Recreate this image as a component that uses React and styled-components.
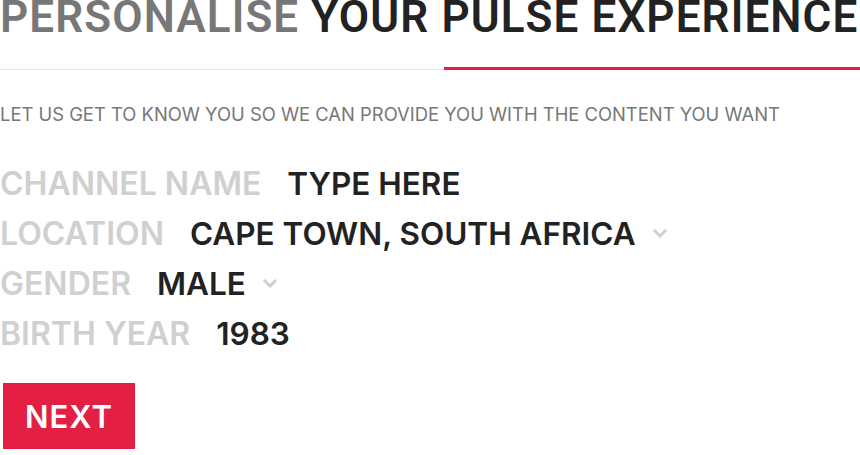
import React from 'react';
import styled, { createGlobalStyle } from 'styled-components';

const Global = createGlobalStyle`
  body {
    margin: 0;
    background: #fff;
    font-family: Inter, "Noto Sans", sans-serif;
  }
`;

const Page = styled.div`
  width: 860px;
  height: 455px;
  overflow: hidden;
  display: flex;
  flex-direction: column;
`;

const Title = styled.h1`
  margin: -9px 0 0;
  font-family: Roboto, "Liberation Sans", sans-serif;
  font-weight: 600;
  font-size: 44px;
  line-height: 52px;
  letter-spacing: 1.1px;
  white-space: nowrap;
  color: #222;
`;

const Muted = styled.span`
  color: #777;
`;

const Rule = styled.div`
  margin-top: 24px;
  display: flex;
  align-items: flex-end;
  height: 3px;
`;

const RuleSegment = styled.div`
  flex: ${(p) => (p.$accent ? '0 0 416px' : '1')};
  height: ${(p) => (p.$accent ? '3px' : '1px')};
  background: ${(p) => (p.$accent ? '#e31f43' : '#e5e5e5')};
`;

const Intro = styled.p`
  margin: 33px 0 0;
  font-size: 18.4px;
  font-weight: 400;
  color: #777;
`;

const Form = styled.div`
  margin-top: 33px;
  display: flex;
  flex-direction: column;
`;

const Row = styled.div`
  display: flex;
  align-items: center;
  height: 50px;
  gap: 26px;
`;

const Label = styled.span`
  font-size: 32px;
  font-weight: 600;
  color: #d0d0d0;
`;

const Value = styled.span`
  font-size: 31.5px;
  font-weight: 600;
  color: #222;
  display: flex;
  align-items: center;
  gap: 16px;
`;

const Chevron = () => (
  <svg width="16" height="10" viewBox="0 0 16 10" fill="none">
    <path d="M2 2l6 6 6-6" stroke="#cfcfcf" strokeWidth="3" />
  </svg>
);

const Button = styled.button`
  margin: 25px 0 0 3px;
  width: 132px;
  height: 66px;
  border: 0;
  background: #e31f43;
  color: #fff;
  font-family: Inter, "Noto Sans", sans-serif;
  font-weight: 600;
  font-size: 31px;
  letter-spacing: 1px;
  cursor: pointer;
  align-self: flex-start;
`;

const fields = [
  { label: 'CHANNEL NAME', value: 'TYPE HERE' },
  { label: 'LOCATION', value: 'CAPE TOWN, SOUTH AFRICA', select: true },
  { label: 'GENDER', value: 'MALE', select: true },
  { label: 'BIRTH YEAR', value: '1983' },
];

export default function App() {
  return (
    <Page>
      <Global />
      <Title>
        <Muted>PERSONALISE</Muted> YOUR PULSE EXPERIENCE
      </Title>
      <Rule>
        <RuleSegment />
        <RuleSegment $accent />
      </Rule>
      <Intro>LET US GET TO KNOW YOU SO WE CAN PROVIDE YOU WITH THE CONTENT YOU WANT</Intro>
      <Form>
        {fields.map((f) => (
          <Row key={f.label}>
            <Label>{f.label}</Label>
            <Value>
              {f.value}
              {f.select && <Chevron />}
            </Value>
          </Row>
        ))}
      </Form>
      <Button>NEXT</Button>
    </Page>
  );
}
